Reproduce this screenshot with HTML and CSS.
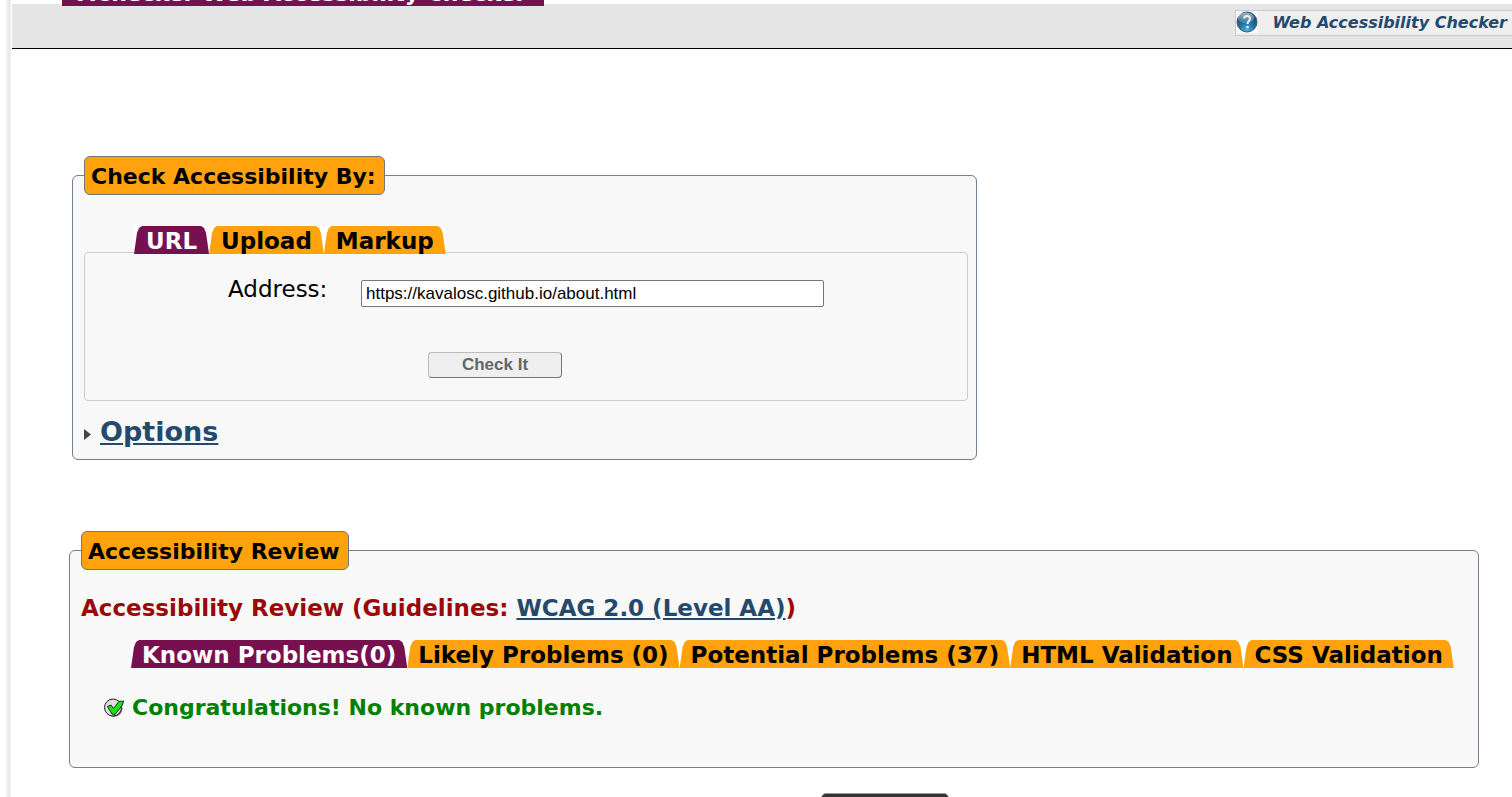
FILE: index.html
```html
<!DOCTYPE html>
<html lang="en">
<head>
<meta charset="utf-8">
<title>Web Accessibility Checker</title>
<link rel="stylesheet" href="styles.css">
</head>
<body>
<div class="page">
  <header class="banner"><h1 class="site-title">AChecker Web Accessibility Checker</h1></header>
  <nav class="toolbar">
    <a class="help-link" href="#">
      <svg class="help-icon" viewBox="0 0 22 22" aria-hidden="true">
        <defs>
          <radialGradient id="orb" cx="50%" cy="90%" r="90%">
            <stop offset="0" stop-color="#4fb4dd"/><stop offset="0.4" stop-color="#2273a3"/><stop offset="1" stop-color="#123c5a"/>
          </radialGradient>
          <linearGradient id="shine" x1="0" y1="0" x2="0" y2="1">
            <stop offset="0" stop-color="#fff" stop-opacity="0.6"/><stop offset="1" stop-color="#fff" stop-opacity="0.1"/>
          </linearGradient>
        </defs>
        <rect width="22" height="22" fill="#f8f8f8"/>
        <circle cx="11" cy="11" r="10" fill="url(#orb)" stroke="#355f7c"/>
        <ellipse cx="10" cy="7" rx="8" ry="5.500" fill="url(#shine)"/>
        <path d="M8 7.500C8.500 4 14 4 14 7.500C14 10 11.500 10 11.500 13" fill="none" stroke="#e8f5fb" stroke-width="2"/>
        <circle cx="11.500" cy="16" r="1.300" fill="#e8f5fb"/>
      </svg>
      <span>Web Accessibility Checker</span>
    </a>
  </nav>
  <main class="content">
    <form class="check-form">
      <fieldset class="panel">
        <legend class="panel-title">Check Accessibility By:</legend>
        <ul class="tabs input-tabs">
          <li><a class="active" href="#url">URL</a></li>
          <li><a href="#upload">Upload</a></li>
          <li><a href="#markup">Markup</a></li>
        </ul>
        <div class="input-box" id="url">
          <div class="address-row">
            <label for="address">Address:</label>
            <input id="address" type="text" value="https://kavalosc.github.io/about.html">
          </div>
          <button class="check-button" type="button">Check It</button>
        </div>
        <h2 class="options">
          <svg class="arrow" viewBox="0 0 7 11" aria-hidden="true"><path d="M0 0L7 5.500L0 11Z" fill="#444"/></svg>
          <a href="#options">Options</a>
        </h2>
      </fieldset>
    </form>
    <fieldset class="panel review">
      <legend class="panel-title">Accessibility Review</legend>
      <h3 class="guidelines">Accessibility Review (Guidelines: <a href="#wcag">WCAG 2.0 (Level AA)</a>)</h3>
      <ul class="tabs">
        <li><a class="active" href="#known">Known Problems(0)</a></li>
        <li><a href="#likely">Likely Problems (0)</a></li>
        <li><a href="#potential">Potential Problems (37)</a></li>
        <li><a href="#html">HTML Validation</a></li>
        <li><a href="#css">CSS Validation</a></li>
      </ul>
      <p class="result">
        <svg class="check-icon" viewBox="0 0 20 20" aria-hidden="true">
          <circle cx="10" cy="10.500" r="8.500" fill="#777"/>
          <circle cx="9" cy="9.500" r="8.500" fill="#ddd" stroke="#222"/>
          <path d="M3.500 8.500L7 7L9.500 10.500L15 3.500L19.500 3L18.500 7L11 16.500L8 16Z" fill="#1fe01f" stroke="#073807"/>
        </svg>
        <span>Congratulations! No known problems.</span>
      </p>
    </fieldset>
  </main>
  <footer class="footer"><div class="footer-mark"></div></footer>
</div>
</body>
</html>
```

FILE: styles.css
```css
* { box-sizing: border-box; }

body {
  margin: 0;
  height: 100vh;
  overflow: hidden;
  color: #000;
  background: linear-gradient(90deg, #fff 5px, #eff0f1 7px, #e2e4e6 10px, #fff 11px);
  font-family: Verdana, "DejaVu Sans", sans-serif;
  font-size: 22px;
}

.page { margin-left: 12px; background: #fff; }

.banner { display: flex; align-items: flex-end; height: 4px; padding-left: 50px; }

.site-title {
  margin: 0 0 -2px;
  padding: 0 18px 0 16px;
  color: #fff;
  background: #77104f;
  font-size: 22px;
  line-height: 24px;
  white-space: nowrap;
  z-index: 1;
}

.toolbar {
  display: flex;
  justify-content: flex-end;
  height: 45px;
  padding-top: 6px;
  background: #e5e5e5;
  border-bottom: 1px solid #000;
}

.help-link {
  display: flex;
  align-items: center;
  gap: 14px;
  height: 26px;
  padding-right: 5px;
  color: #234a6d;
  background: #efefef;
  border: 1px solid #ccc;
  border-right: 0;
  font-size: 16px;
  font-weight: bold;
  font-style: italic;
  line-height: 26px;
  text-decoration: none;
}

.help-icon { width: 22px; height: 22px; align-self: flex-start; }

.content { padding: 107px 33px 0 57px; }

.check-form { max-width: 908px; padding-left: 3px; }

.panel {
  min-width: 0;
  margin: 0;
  padding: 0 8px 11px 11px;
  background: #f8f8f8;
  border: 1px solid #708090;
  border-radius: 6px;
}

.panel-title {
  padding: 2px 8px 0 6px;
  background: #ffa20d;
  border: 1px solid #777;
  border-radius: 6px;
  font-weight: bold;
  line-height: 35px;
}

.tabs {
  display: flex;
  width: max-content;
  margin: 0 0 0 50px;
  padding: 0;
  list-style: none;
}

.tabs li { background: #fff; }

.tabs a {
  display: block;
  height: 28px;
  padding: 0 11px;
  color: #000;
  background: #ffa20d;
  clip-path: polygon(0 100%, 3px 7px, 5px 2px, 8px 0, calc(100% - 8px) 0, calc(100% - 5px) 2px, calc(100% - 3px) 7px, 100% 100%);
  font-size: 23px;
  font-weight: bold;
  line-height: 30px;
  text-decoration: none;
}

.tabs .active { color: #fff; background: #77104f; }

.input-tabs { position: relative; margin-top: 31px; margin-bottom: -2px; }

.input-tabs a { padding: 0 12px; }

.input-box {
  height: 149px;
  padding-top: 21px;
  border: 1px solid #ccc;
  border-radius: 4px;
}

.address-row { display: flex; align-items: flex-start; padding-left: 143px; }

.address-row label { width: 133px; font-size: 23px; line-height: 30px; }

.address-row input {
  flex: 0 1 463px;
  min-width: 0;
  height: 27px;
  margin-top: 6px;
  padding: 0 4px;
  border: 1px solid #767676;
  border-radius: 2px;
  font: 17px "Liberation Sans", Arial, sans-serif;
}

.check-button {
  display: block;
  width: 134px;
  height: 26px;
  margin: 45px 0 0 343px;
  padding: 0;
  color: #666;
  background: #efefef;
  border: 1px solid #bbb;
  border-right-color: #777;
  border-bottom-color: #777;
  border-radius: 4px;
  font: bold 17px "Liberation Sans", Arial, sans-serif;
}

.options {
  display: flex;
  align-items: center;
  gap: 9px;
  margin: 14px 0 0;
  font-size: 27px;
  line-height: 33px;
}

.arrow { width: 7px; height: 11px; margin-top: 6px; }

a { color: #234a6d; }

.review { margin-top: 71px; padding-bottom: 44px; }

.guidelines { margin: 24px 0 18px; color: #9b0808; font-size: 23px; line-height: 28px; }

.result {
  display: flex;
  align-items: center;
  gap: 8px;
  margin: 25px 0 0 23px;
  color: #008000;
  font-weight: bold;
  line-height: 30px;
}

.check-icon { width: 20px; height: 20px; }

.footer { display: flex; justify-content: center; margin-top: 25px; padding-left: 245px; }

.footer-mark { width: 128px; height: 32px; background: #333; border: 1px solid #999; border-radius: 5px; }
```
